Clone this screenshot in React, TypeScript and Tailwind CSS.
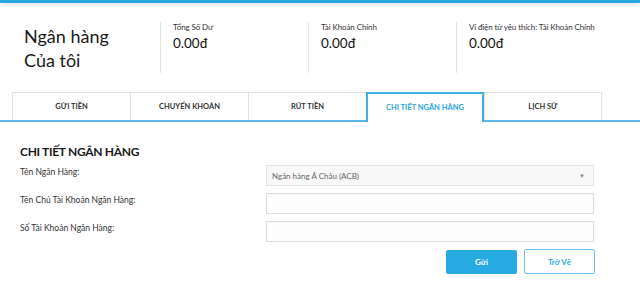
import React from "react";

const tabs = ["GỬI TIỀN", "CHUYỂN KHOẢN", "RÚT TIỀN", "CHI TIẾT NGÂN HÀNG", "LỊCH SỬ"];
const stats = [
  { label: "Tổng Số Dư", value: "0.00đ" },
  { label: "Tài Khoản Chính", value: "0.00đ" },
  { label: "Ví điện tử yêu thích: Tài Khoản Chính", value: "0.00đ" },
];

export default function App() {
  return (
    <div
      className="w-[640px] h-[302px] bg-white overflow-hidden text-[#222]"
      style={{ fontFamily: 'Lato, "Open Sans", sans-serif' }}
    >
      <div className="relative z-10 h-[3px] bg-[#29a8e0] shadow-[0_1px_5px_rgba(0,0,0,0.18)]" />

      {/* header */}
      <div className="flex pt-[19px]">
        <div className="w-[160px] pl-[24px] pt-[2px] text-[18px] leading-[24px] text-[#1a1a1a]">
          <div>Ngân hàng</div>
          <div>Của tôi</div>
        </div>
        {stats.map((s) => (
          <div key={s.label} className="w-[148px] h-[51px] border-l border-[#e3e3e3] pl-[12px] whitespace-nowrap">
            <div className="text-[8px] leading-[10px] text-[#333] tracking-[-0.1px]">{s.label}</div>
            <div className="mt-[2px] text-[13.5px] leading-[18px] text-[#111]">{s.value}</div>
          </div>
        ))}
      </div>

      {/* tabs */}
      <div className="mt-[19px] flex px-[12px] border-b-2 border-[#5ab9e8] h-[30px]">
        {tabs.map((t, i) => {
          const active = i === 3;
          return active ? (
            <div
              key={t}
              className="relative z-10 w-[118px] h-[30px] border-t-2 border-x-2 border-[#3fb0e4] bg-white flex items-center justify-center text-[7.5px] font-bold text-[#2aa5de]"
            >
              {t}
            </div>
          ) : (
            <div
              key={t}
              className={`w-[118px] h-[28px] border-t border-l border-[#e2e2e2] ${
                i === 4 ? "border-r" : ""
              } flex items-center justify-center text-[7.5px] font-bold text-[#333]`}
            >
              {t}
            </div>
          );
        })}
      </div>

      {/* form */}
      <div className="pt-[21px] pl-[20px]">
        <div className="text-[12px] leading-[18px] font-bold tracking-[-0.3px] text-[#1a1a1a]">CHI TIẾT NGÂN HÀNG</div>
        <div className="mt-[4px] flex flex-col gap-[7px]">
          <div className="flex">
            <div className="w-[246px] text-[8.5px] leading-[14px] text-[#333]">Tên Ngân Hàng:</div>
            <div className="w-[328px] h-[21px] border border-[#e4e4e4] bg-[#f8f8f8] flex items-center justify-between px-[5px] text-[8px] text-[#666]">
              <span>Ngân hàng Á Châu (ACB)</span>
              <span className="text-[6px] text-[#888] pr-[3px]">▼</span>
            </div>
          </div>
          <div className="flex">
            <div className="w-[246px] text-[8.5px] leading-[14px] text-[#333]">Tên Chủ Tài Khoản Ngân Hàng:</div>
            <div className="w-[328px] h-[21px] border border-[#dcdcdc] bg-[#fdfdfd]" />
          </div>
          <div className="flex">
            <div className="w-[246px] text-[8.5px] leading-[14px] text-[#333]">Số Tài Khoản Ngân Hàng:</div>
            <div className="w-[328px] h-[21px] border border-[#dcdcdc] bg-[#fdfdfd]" />
          </div>
        </div>
        <div className="mt-[8px] w-[575px] flex justify-end gap-[7px]">
          <button className="w-[71px] h-[24px] rounded-[2px] bg-[#27a9e1] text-white text-[8px] font-bold">
            Gửi
          </button>
          <button className="w-[71px] h-[25px] -mt-[1px] rounded-[2px] border border-[#6cc4ec] bg-white text-[#2aa5de] text-[8px] font-bold">
            Trở Về
          </button>
        </div>
      </div>
    </div>
  );
}
